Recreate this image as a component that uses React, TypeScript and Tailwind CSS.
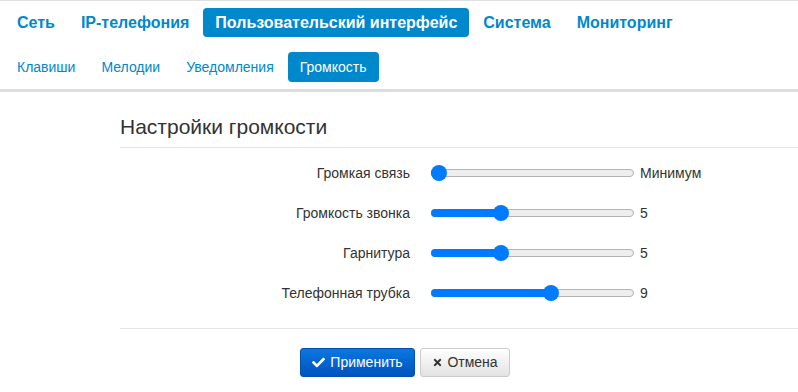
import React from "react";
import { FaCheck, FaTimes } from "react-icons/fa";

const topItems = ["Сеть", "IP-телефония", "Пользовательский интерфейс", "Система", "Мониторинг"];
const subItems = ["Клавиши", "Мелодии", "Уведомления", "Громкость"];

const rows: { label: string; value: number; text: string }[] = [
  { label: "Громкая связь", value: 0, text: "Минимум" },
  { label: "Громкость звонка", value: 5, text: "5" },
  { label: "Гарнитура", value: 5, text: "5" },
  { label: "Телефонная трубка", value: 9, text: "9" },
];

function Slider({ value }: { value: number }) {
  const max = 15;
  const trackW = 203;
  const thumb = 16;
  const left = (value / max) * (trackW - thumb);
  return (
    <div className="relative w-[203px] h-[16px] flex items-center">
      <div className="w-full h-[8px] rounded-full bg-[#eeeeee] border border-[#b4b4b4]" />
      <div
        className="absolute left-0 top-[4px] h-[8px] rounded-full bg-[#007bff]"
        style={{ width: left + thumb / 2 }}
      />
      <div
        className="absolute top-0 w-[16px] h-[16px] rounded-full bg-[#007bff]"
        style={{ left }}
      />
    </div>
  );
}

export default function App() {
  return (
    <div className="w-[798px] h-[392px] bg-white overflow-hidden font-['Liberation_Sans',Arial,sans-serif] border-t border-[#e0e0e0]">
      <div className="flex gap-[2px] pl-[5px] pt-[7px]">
        {topItems.map((t) => {
          const active = t === "Пользовательский интерфейс";
          return (
            <div
              key={t}
              className={
                "h-[29px] px-3 flex items-center rounded-[4px] text-[16px] font-bold " +
                (active ? "bg-[#0088cc] text-white" : "text-[#0088cc]")
              }
            >
              {t}
            </div>
          );
        })}
      </div>
      <div className="flex gap-[2px] pl-[5px] mt-[15px]">
        {subItems.map((t) => {
          const active = t === "Громкость";
          return (
            <div
              key={t}
              className={
                "h-[30px] px-3 flex items-center rounded-[4px] text-[14px] " +
                (active ? "bg-[#0088cc] text-white" : "text-[#0088cc]")
              }
            >
              {t}
            </div>
          );
        })}
      </div>
      <div className="mt-[7px] h-[3px] bg-[#dddddd]" />
      <div className="ml-[120px]">
        <div className="pt-[24px] pb-[9px] text-[21px] leading-[22px] text-[#333333] border-b border-[#e5e5e5]">
          Настройки громкости
        </div>
        <div className="pt-[17px] pb-[27px] border-b border-[#e5e5e5] flex flex-col gap-[24px]">
          {rows.map((r) => (
            <div key={r.label} className="flex items-center h-[16px]">
              <div className="w-[290px] text-right text-[14px] text-[#333333]">{r.label}</div>
              <div className="ml-[21px]">
                <Slider value={r.value} />
              </div>
              <div className="ml-[6px] text-[14px] text-[#333333]">{r.text}</div>
            </div>
          ))}
        </div>
        <div className="flex gap-[5px] ml-[180px] mt-[19px]">
          <button className="h-[29px] w-[115px] flex items-center justify-center gap-[5px] rounded-[3px] border border-[#0050b0] bg-gradient-to-b from-[#0b78de] to-[#0053c0] text-white text-[14px]">
            <FaCheck className="w-[13px] h-[13px]" />
            Применить
          </button>
          <button className="h-[29px] w-[90px] flex items-center justify-center gap-[4px] rounded-[3px] border border-[#cccccc] bg-gradient-to-b from-[#ffffff] to-[#e2e2e2] text-[#333333] text-[14px]">
            <FaTimes className="w-[11px] h-[11px]" />
            Отмена
          </button>
        </div>
      </div>
    </div>
  );
}
